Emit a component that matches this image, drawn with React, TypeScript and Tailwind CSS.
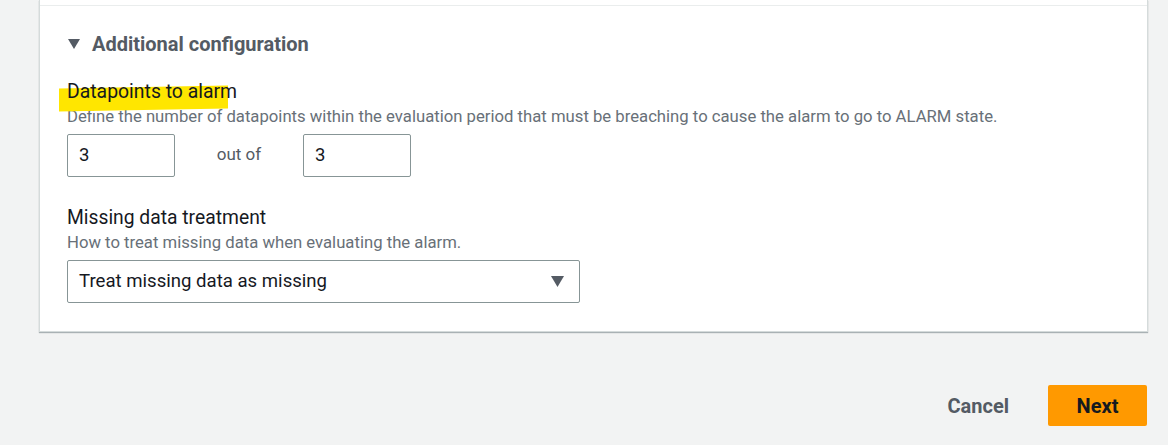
export default function App() {
  return (
    <div className="w-[1168px] h-[445px] overflow-hidden bg-[#f2f3f3] font-['Roboto',sans-serif] text-[#16191f]">
      <div className="ml-[39px] w-[1109px] h-[332px] bg-white border-l border-r border-b border-[#d5dbdb] shadow-[0_1px_1px_0_rgba(0,28,36,0.3)]">
        <div className="h-[6px] border-b border-[#eaeded]" />
        <div className="pl-[27px] pt-[26px]">
          <div className="flex items-center gap-[12px] pl-[1px] h-[24px]">
            <svg width="12" height="10" viewBox="0 0 12 10">
              <path d="M0 0 L12 0 L6 10 Z" fill="#545b64" />
            </svg>
            <span className="text-[20px] font-bold text-[#545b64] leading-[24px]">Additional configuration</span>
          </div>

          <div className="mt-[24px] relative">
            <div className="absolute left-[-8px] top-[7px] w-[169px] h-[23px] bg-[#ffe600] -skew-y-1" />
            <div className="relative text-[19.4px] leading-[24px]">Datapoints to alarm</div>
          </div>
          <div className="text-[16.7px] text-[#687078] leading-[22px] mt-[2px]">
            Define the number of datapoints within the evaluation period that must be breaching to cause the alarm to go to ALARM state.
          </div>
          <div className="flex items-center mt-[6px]">
            <div className="w-[108px] h-[43px] border border-[#879596] rounded-[2px] flex items-center px-[11px] text-[18.5px]">3</div>
            <span className="w-[128px] text-center text-[17px] text-[#545b64] pb-[2px]">out of</span>
            <div className="w-[108px] h-[43px] border border-[#879596] rounded-[2px] flex items-center px-[11px] text-[18.5px]">3</div>
          </div>

          <div className="text-[19.3px] leading-[24px] mt-[29px]">Missing data treatment</div>
          <div className="text-[16.7px] text-[#687078] leading-[22px] mt-[2px]">How to treat missing data when evaluating the alarm.</div>
          <div className="mt-[6px] w-[513px] h-[43px] border border-[#879596] rounded-[2px] flex items-center justify-between pl-[11px] pr-[15px] text-[18.6px]">
            <span>Treat missing data as missing</span>
            <svg width="13" height="11" viewBox="0 0 13 11">
              <path d="M0 0 L13 0 L6.5 11 Z" fill="#545b64" />
            </svg>
          </div>
        </div>
      </div>

      <div className="flex justify-end items-center pr-[21px] mt-[53px] gap-[39px]">
        <span className="text-[20px] font-bold text-[#545b64]">Cancel</span>
        <div className="w-[99px] h-[41px] bg-[#ff9900] rounded-[2px] flex items-center justify-center text-[20px] font-bold text-[#16191f]">Next</div>
      </div>
    </div>
  );
}
